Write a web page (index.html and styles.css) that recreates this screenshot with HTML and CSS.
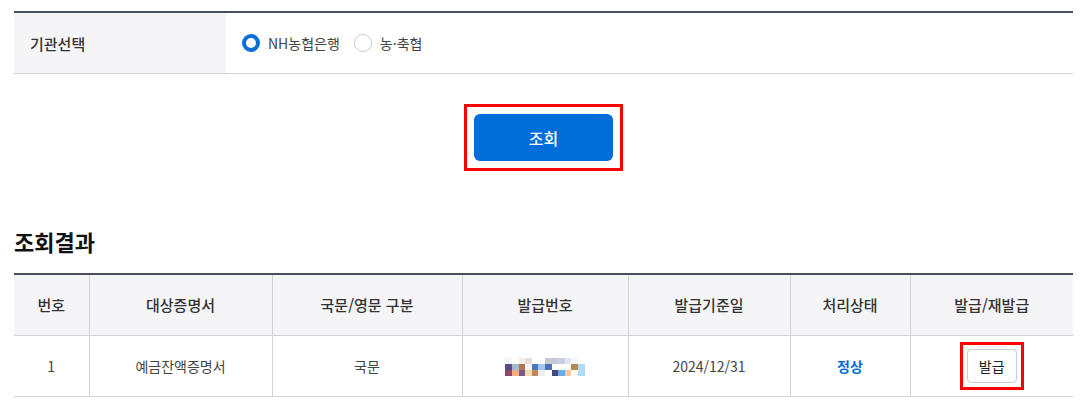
FILE: index.html
```html
<!DOCTYPE html>
<html lang="ko">
<head>
<meta charset="utf-8">
<link rel="stylesheet" href="styles.css">
</head>
<body>
<div class="page">
  <div class="form-table">
    <div class="form-label">기관선택</div>
    <div class="form-value">
      <label class="radio"><span class="radio-dot checked"></span><span>NH농협은행</span></label>
      <label class="radio"><span class="radio-dot"></span><span>농·축협</span></label>
    </div>
  </div>

  <div class="btn-area">
    <div class="highlight">
      <button class="btn-primary">조회</button>
    </div>
  </div>

  <h2 class="section-title">조회결과</h2>

  <table class="result">
    <colgroup>
      <col class="c1">
      <col class="c2">
      <col class="c3">
      <col class="c4">
      <col class="c5">
      <col class="c6">
      <col>
    </colgroup>
    <thead>
      <tr>
        <th>번호</th>
        <th>대상증명서</th>
        <th>국문/영문 구분</th>
        <th>발급번호</th>
        <th>발급기준일</th>
        <th>처리상태</th>
        <th>발급/재발급</th>
      </tr>
    </thead>
    <tbody>
      <tr>
        <td>1</td>
        <td>예금잔액증명서</td>
        <td>국문</td>
        <td><span class="mosaic"><i style="background:#f2f6fb"></i><i style="background:#ffffff"></i><i style="background:#f7efe6"></i><i style="background:#e8ddd6"></i><i style="background:#ffffff"></i><i style="background:#ffffff"></i><i style="background:#c8c8d0"></i><i style="background:#c4c8da"></i><i style="background:#c8d0e0"></i><i style="background:#dfe7f7"></i><i style="background:#f4f8fb"></i><i style="background:#ffffff"></i><i style="background:#5a4a8a"></i><i style="background:#a8b8d0"></i><i style="background:#b07850"></i><i style="background:#f4f4f6"></i><i style="background:#4a78c0"></i><i style="background:#a0c8f0"></i><i style="background:#4a70b8"></i><i style="background:#ffffff"></i><i style="background:#ffffff"></i><i style="background:#ffffff"></i><i style="background:#b88858"></i><i style="background:#b0dcfc"></i><i style="background:#8a4a68"></i><i style="background:#f0b080"></i><i style="background:#7a5a90"></i><i style="background:#f8d8b0"></i><i style="background:#c08860"></i><i style="background:#eeeeee"></i><i style="background:#ffffff"></i><i style="background:#404880"></i><i style="background:#70a8e8"></i><i style="background:#f8c898"></i><i style="background:#fffbe8"></i><i style="background:#b0dcfc"></i></span></td>
        <td>2024/12/31</td>
        <td class="status">정상</td>
        <td><span class="highlight small"><button class="btn-issue">발급</button></span></td>
      </tr>
    </tbody>
  </table>
</div>
</body>
</html>
```

FILE: styles.css
```css
* { box-sizing: border-box; }
html, body { margin: 0; padding: 0; background: #fff; }
body {
  font-family: "Noto Sans CJK KR", "Noto Sans", sans-serif;
  color: #333;
}
.page {
  padding: 11px 15px 0 14px;
}
.form-table {
  display: flex;
  border-top: 2px solid #4a4e5c;
  border-bottom: 1px solid #d3d3d3;
  height: 63px;
}
.form-label {
  width: 212px;
  background: #f5f5f7;
  padding-left: 16px;
  display: flex;
  align-items: center;
  font-size: 15px;
  font-weight: 500;
  color: #333;
}
.form-value {
  flex: 1;
  display: flex;
  align-items: center;
  padding-left: 16px;
  gap: 14px;
}
.radio {
  display: flex;
  align-items: center;
  gap: 8px;
  font-size: 14px;
  color: #444;
}
.radio-dot {
  width: 18px;
  height: 18px;
  border-radius: 50%;
  border: 1px solid #ccc;
  background: #fff;
}
.radio-dot.checked {
  border: 4px solid #0a6ed8;
}
.btn-area {
  display: flex;
  justify-content: center;
  padding-top: 30px;
}
.highlight {
  display: inline-block;
  border: 3px solid #f00;
  padding: 7px;
}
.btn-primary {
  display: block;
  width: 139px;
  height: 47px;
  border: 0;
  border-radius: 6px;
  background: #006dd8;
  color: #fff;
  font-family: inherit;
  font-size: 16px;
  font-weight: 500;
}
.section-title {
  margin: 55px 0 0 0;
  font-size: 22px;
  font-weight: 700;
  color: #111;
  line-height: 30px;
}
.result {
  margin-top: 17px;
  width: 100%;
  border-collapse: collapse;
  table-layout: fixed;
  border-top: 2px solid #4a4e5c;
}
.c1 { width: 75px; }
.c2 { width: 183px; }
.c3 { width: 190px; }
.c4 { width: 166px; }
.c5 { width: 162px; }
.c6 { width: 120px; }
.result th {
  height: 61px;
  background: #f5f5f7;
  font-size: 15px;
  font-weight: 500;
  color: #333;
  border-left: 1px solid #d3d3d3;
  border-bottom: 1px solid #d3d3d3;
  padding: 0;
}
.result td {
  height: 61px;
  font-size: 14px;
  color: #444;
  text-align: center;
  border-left: 1px solid #d3d3d3;
  border-bottom: 1px solid #d3d3d3;
  padding: 0;
}
.result th:first-child, .result td:first-child { border-left: 0; }
.result td.status { color: #0a6ed8; font-weight: 700; }
.mosaic {
  display: inline-grid;
  grid-template-columns: repeat(12, 6.6px);
  grid-auto-rows: 6px;
  vertical-align: middle;
}
.mosaic i { display: block; }
.highlight.small {
  padding: 4px;
  vertical-align: middle;
}
.btn-issue {
  display: block;
  width: 50px;
  height: 34px;
  border: 1px solid #ccc;
  border-radius: 4px;
  background: #fff;
  font-family: inherit;
  font-size: 14px;
  color: #222;
}
```
